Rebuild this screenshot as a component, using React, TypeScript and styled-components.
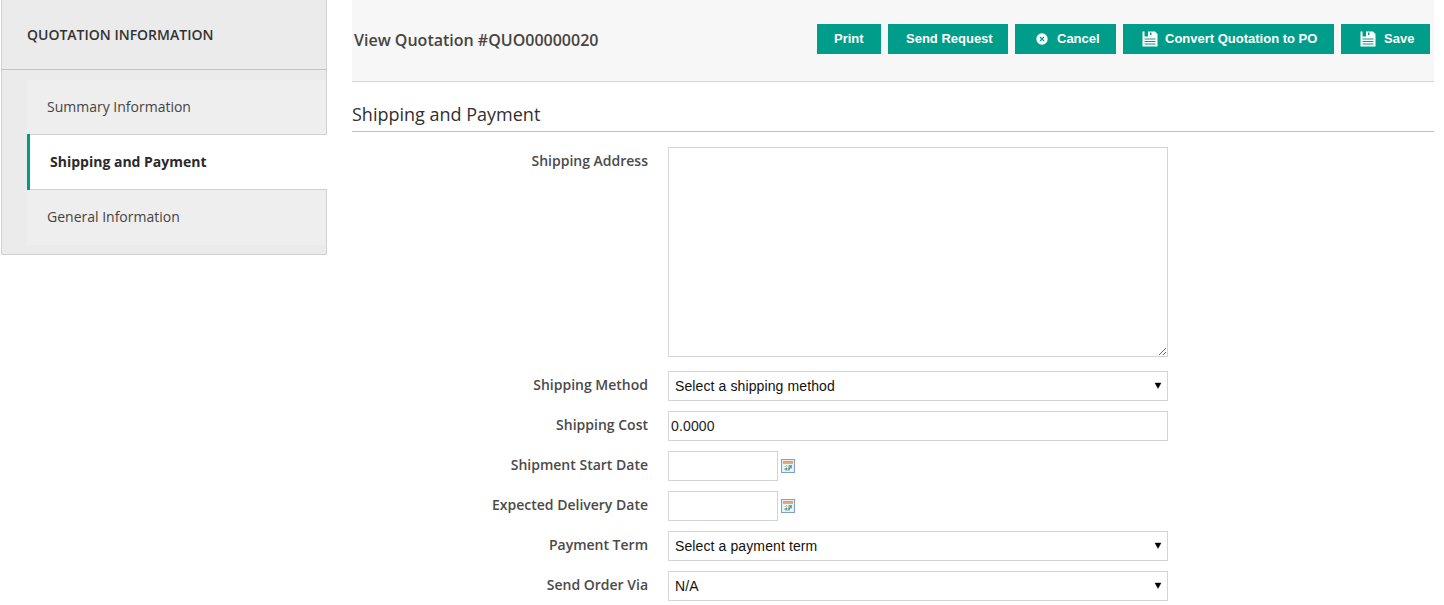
import React from "react";
import styled, { createGlobalStyle } from "styled-components";

const GlobalStyle = createGlobalStyle`
  * { box-sizing: border-box; }
  body {
    margin: 0;
    background: #fff;
    color: #303030;
    font-family: "Open Sans", "Liberation Sans", sans-serif;
    overflow: hidden;
  }
`;

const Page = styled.div`
  display: flex;
  align-items: flex-start;
  height: 605px;
  padding: 0 10px 0 1px;
  gap: 25px;
`;

const Sidebar = styled.nav`
  width: 326px;
  flex: none;
  background: #ebebeb;
  border: 1px solid #d1d1d1;
  border-top: 0;
`;

const SidebarTitle = styled.div`
  height: 70px;
  padding-left: 25px;
  border-bottom: 1px solid #c4c4c4;
  font-size: 14px;
  line-height: 70px;
  font-weight: 600;
  color: #333;
`;

const TabList = styled.ul`
  list-style: none;
  margin: 0;
  padding: 10px 0 9px 25px;
`;

const Tab = styled.li<{ $active?: boolean }>`
  height: ${(p) => (p.$active ? 56 : 55)}px;
  margin: ${(p) => (p.$active ? "-1px -1px 0 0" : "0")};
  padding-left: 20px;
  line-height: ${(p) => (p.$active ? 56 : 54)}px;
  font-size: 14px;
  font-weight: ${(p) => (p.$active ? 700 : 400)};
  color: ${(p) => (p.$active ? "#2a2a2a" : "#444")};
  background: ${(p) => (p.$active ? "#fff" : "#eee")};
  border-left: ${(p) => (p.$active ? "3px solid #009a87" : "0")};
  box-shadow: ${(p) => (p.$active ? "inset 0 1px #d1d1d1, inset 0 -1px #d1d1d1" : "none")};
`;

const Main = styled.main`
  flex: 1;
  min-width: 0;
`;

const Header = styled.header`
  display: flex;
  justify-content: space-between;
  height: 82px;
  padding: 24px 4px 0 2px;
  background: #f7f7f7;
  border-bottom: 1px solid #d4d4d4;
`;

const Title = styled.h1`
  margin: 0;
  font-size: 16px;
  line-height: 32px;
  font-weight: 600;
  color: #484440;
`;

const Actions = styled.div`
  display: flex;
  gap: 7px;
`;

const ActionButton = styled.button<{ $width: number; $pad: number; $gap?: number }>`
  display: flex;
  align-items: center;
  width: ${(p) => p.$width}px;
  height: 30px;
  padding: 0 0 0 ${(p) => p.$pad}px;
  gap: ${(p) => p.$gap ?? 0}px;
  border: 0;
  background: #009e8a;
  color: #fff;
  font: bold 13px/28px "Liberation Sans", Arial, sans-serif;
  white-space: nowrap;

  span { height: 29px; }
  svg { flex: none; }
`;

const SectionTitle = styled.h2`
  height: 50px;
  margin: 0;
  padding-top: 19px;
  border-bottom: 1px solid #c0c0c0;
  font-size: 18px;
  line-height: 26px;
  font-weight: 400;
  color: #303030;
`;

const Form = styled.form`
  display: flex;
  flex-direction: column;
  gap: 10px;
  padding-top: 15px;
`;

const Row = styled.div<{ $tall?: boolean }>`
  display: flex;
  align-items: flex-start;
  height: ${(p) => (p.$tall ? 214 : 30)}px;
`;

const Label = styled.label`
  width: 296px;
  margin-right: 20px;
  flex: none;
  text-align: right;
  font-size: 14px;
  line-height: 27px;
  font-weight: 600;
  color: #4a4a4a;
`;

const TextArea = styled.textarea`
  width: 500px;
  height: 210px;
  margin: 0;
  border: 1px solid #d2d4da;
  border-radius: 0;
  background: #fff;
  resize: vertical;
`;

const Input = styled.input<{ $width: number }>`
  width: ${(p) => p.$width}px;
  height: 30px;
  margin: 0;
  padding: 0 2px;
  border: 1px solid #d2d4da;
  border-radius: 0;
  background: #fff;
  color: #222;
  font: 14px "Liberation Sans", Arial, sans-serif;
  letter-spacing: 0.15px;
`;

const SelectBox = styled.div`
  display: flex;
  align-items: center;
  justify-content: space-between;
  width: 500px;
  height: 30px;
  padding: 0 5px 0 6px;
  border: 1px solid #d2d4da;
  color: #111;
  font: 14px/28px "Liberation Sans", Arial, sans-serif;
  letter-spacing: 0.11px;
`;

const CalendarSlot = styled.span`
  display: flex;
  padding: 8px 0 0 3px;
`;

const Select = ({ value }: { value: string }) => (
  <SelectBox role="combobox" aria-label={value}>
    <span>{value}</span>
    <svg width="8" height="8" viewBox="0 0 8 8" aria-hidden="true">
      <path d="M1 1h6L4 6.5z" fill="#000" stroke="#000" strokeWidth=".4" />
    </svg>
  </SelectBox>
);

const SaveIcon = () => (
  <svg width="16" height="16" viewBox="0 0 16 16" fill="#fff" aria-hidden="true">
    <path
      d="M.5.5H2.500v5H6v-5h7L15.500 3v12.500H.5zM8 1.500v2.500h1.500V1.500zM2.500 7.500v1h11v-1zm0 2.500v1h11v-1zm0 2.500v1h11v-1z"
      fillRule="evenodd"
    />
  </svg>
);

const CancelIcon = () => (
  <svg width="12" height="12" viewBox="0 0 12 12" aria-hidden="true">
    <circle cx="6" cy="6" r="5.7" fill="#fff" />
    <path d="M4 4l4 4M8 4L4 8" stroke="#009e8a" strokeWidth="1.2" />
  </svg>
);

const CalendarIcon = () => (
  <svg width="14" height="14" viewBox="0 0 14 14" shapeRendering="crispEdges" aria-hidden="true">
    <path d="M0 0h14v14H0z" fill="#7d9fd0" />
    <path d="M1 1h12v12H1z" fill="#e2f1fa" />
    <path d="M2 2h10v3H2z" fill="#f6a468" />
    <path d="M2 2h10v1H2z" fill="#ee905c" />
    <path d="M3 6h8v6H3z" fill="#b9cfd2" />
    <path d="M3 6h2v1H3zM6 6h1v1H6zM3 8h2v1H3zM6 8h1v1H6zM3 11h1v1H3zM9 10h2v2H9z" fill="#fff" />
    <path d="M8 6h3v3H8zM4 9h2v2H4zM7 9h2v2H7z" fill="#79b37d" />
    <path d="M9 7h1v1H9zM5 9h1v1H5zM8 9h1v1H8z" fill="#4b9058" />
  </svg>
);

const DateField = ({ label }: { label: string }) => (
  <Row>
    <Label>{label}</Label>
    <Input $width={110} aria-label={label} />
    <CalendarSlot><CalendarIcon /></CalendarSlot>
  </Row>
);

export default function App() {
  return (
    <>
      <GlobalStyle />
      <Page>
        <Sidebar>
          <SidebarTitle>QUOTATION INFORMATION</SidebarTitle>
          <TabList>
            <Tab>Summary Information</Tab>
            <Tab $active>Shipping and Payment</Tab>
            <Tab>General Information</Tab>
          </TabList>
        </Sidebar>
        <Main>
          <Header>
            <Title>View Quotation #QUO00000020</Title>
            <Actions>
              <ActionButton $width={64} $pad={17}><span>Print</span></ActionButton>
              <ActionButton $width={120} $pad={18}><span>Send Request</span></ActionButton>
              <ActionButton $width={101} $pad={21} $gap={9}><CancelIcon /><span>Cancel</span></ActionButton>
              <ActionButton $width={211} $pad={19} $gap={7}><SaveIcon /><span>Convert Quotation to PO</span></ActionButton>
              <ActionButton $width={89} $pad={19} $gap={8}><SaveIcon /><span>Save</span></ActionButton>
            </Actions>
          </Header>
          <SectionTitle>Shipping and Payment</SectionTitle>
          <Form>
            <Row $tall>
              <Label>Shipping Address</Label>
              <TextArea aria-label="Shipping Address" />
            </Row>
            <Row>
              <Label>Shipping Method</Label>
              <Select value="Select a shipping method" />
            </Row>
            <Row>
              <Label>Shipping Cost</Label>
              <Input $width={500} defaultValue="0.0000" />
            </Row>
            <DateField label="Shipment Start Date" />
            <DateField label="Expected Delivery Date" />
            <Row>
              <Label>Payment Term</Label>
              <Select value="Select a payment term" />
            </Row>
            <Row>
              <Label>Send Order Via</Label>
              <Select value="N/A" />
            </Row>
          </Form>
        </Main>
      </Page>
    </>
  );
}
